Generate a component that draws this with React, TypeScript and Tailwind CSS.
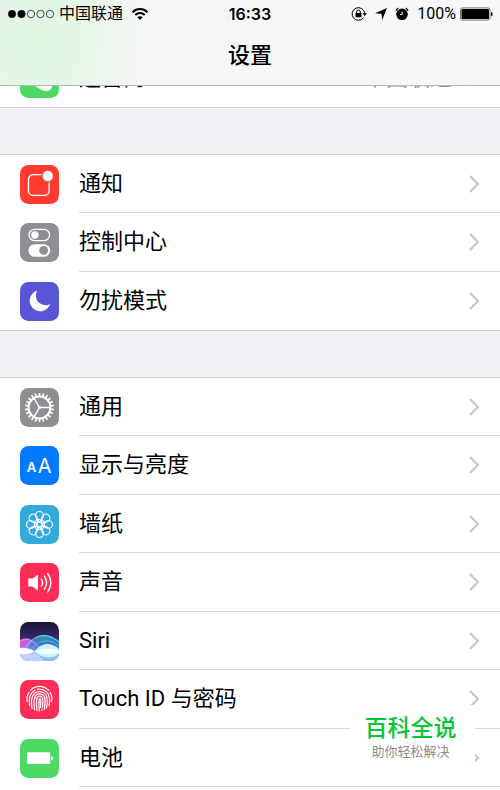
import React from "react";

type Row = { label: string; icon: React.ReactNode; value?: string };

const Tile = ({ color, children }: { color: string; children: React.ReactNode }) => (
  <svg viewBox="0 0 39 39" className="size-[39px] shrink-0" aria-hidden="true">
    <rect width="39" height="39" rx="8.5" fill={color} />
    {children}
  </svg>
);

const PhoneIcon = () => (
  <Tile color="#4cd964">
    <path
      d="M9 10c2-3 4-3 5-1l3 4c1 2-1 3-2 4 1 4 4 7 8 8 1-1 2-3 4-2l4 3c2 1 1 3-1 5-2 1-5 1.500-8 0C15 28 10 22 8.500 16c-.5-2-.5-4 .5-6z"
      fill="#fff"
    />
  </Tile>
);

const NotificationIcon = () => (
  <Tile color="#ff3b30">
    <path
      d="M21.300 9.700H13a4.500 4.500 0 0 0-4.500 4.500v11.600a4.500 4.500 0 0 0 4.500 4.500h11.600a4.500 4.500 0 0 0 4.500-4.500v-8.200"
      fill="none"
      stroke="#fff"
      strokeWidth="1.300"
    />
    <circle cx="27.700" cy="11" r="5.200" fill="#fff" />
  </Tile>
);

const ControlIcon = () => (
  <Tile color="#8e8e93">
    <rect x="9" y="6.300" width="20.600" height="11.400" rx="5.700" fill="none" stroke="#fff" strokeWidth="1.300" />
    <circle cx="14.900" cy="12" r="3.700" fill="#fff" />
    <rect x="8.400" y="21.200" width="21.800" height="12.600" rx="6.300" fill="#fff" />
    <circle cx="23.600" cy="27.400" r="4.400" fill="#8e8e93" />
  </Tile>
);

const MoonIcon = () => (
  <Tile color="#5856d6">
    <path d="M17.200 8.600A10.500 10.500 0 1 0 30.200 21.900 9.600 9.600 0 0 1 17.200 8.600z" fill="#fff" />
  </Tile>
);

const GearIcon = () => (
  <Tile color="#8e8e93">
    <g stroke="#fff" fill="none">
      <circle cx="19.500" cy="19.500" r="10.900" strokeWidth="2" />
      {Array.from({ length: 22 }, (_, i) => (
        <path key={i} d="M19.500 8.500V5" strokeWidth="1.700" transform={`rotate(${(i * 360) / 22} 19.500 19.500)`} />
      ))}
      <path d="M19.500 19.500H30M19.500 19.500L14.200 10.400M19.500 19.500L14.200 28.600" strokeWidth="1.400" />
    </g>
    <circle cx="19.500" cy="19.500" r="1.400" fill="#fff" />
  </Tile>
);

const DisplayIcon = () => (
  <Tile color="#007aff">
    <g fill="#fff" className="font-['Inter',sans-serif]">
      <text x="6.700" y="25.500" fontSize="13" fontWeight="600">A</text>
      <text x="17.700" y="26.500" fontSize="20">A</text>
    </g>
  </Tile>
);

const WallpaperIcon = () => (
  <Tile color="#34aadc">
    <g stroke="#fff" strokeWidth="1.150" fill="none">
      {Array.from({ length: 8 }, (_, i) => (
        <g key={i} transform={`rotate(${i * 45} 19.500 19.500)`}>
          <circle cx="19.500" cy="10.500" r="4" />
          <path d="M17 13.500L19.500 17l2.500-3.500" />
        </g>
      ))}
      <circle cx="19.500" cy="19.500" r="2.500" />
    </g>
  </Tile>
);

const SoundIcon = () => (
  <Tile color="#ff2d55">
    <path d="M8.300 15.600h4.400l5.300-4v16.200l-5.300-4.200H8.300z" fill="#fff" />
    <g stroke="#fff" strokeWidth="1.400" fill="none">
      <path d="M21 15.500q3 4.100 0 8.200" />
      <path d="M24.200 12.700q4.600 7 0 13.900" />
      <path d="M27.400 10q6.800 9.700 0 19.300" />
    </g>
  </Tile>
);

const SiriIcon = () => (
  <svg viewBox="0 0 39 39" className="size-[39px] shrink-0" aria-hidden="true">
    <defs>
      <clipPath id="siri-clip"><rect width="39" height="39" rx="8.500" /></clipPath>
      <linearGradient id="siri-night" x2="0" y2="1">
        <stop stopColor="#1b1238" />
        <stop offset=".4" stopColor="#362766" />
        <stop offset=".72" stopColor="#5878cf" />
        <stop offset="1" stopColor="#a5cdfa" />
      </linearGradient>
      <linearGradient id="siri-pink" x2="1" y2="0">
        <stop stopColor="#ee5be9" />
        <stop offset=".5" stopColor="#a66df0" />
        <stop offset="1" stopColor="#2a84dc" />
      </linearGradient>
      <linearGradient id="siri-teal" x2="0" y2="1">
        <stop stopColor="#35c9d4" />
        <stop offset=".5" stopColor="#2b7fd5" />
        <stop offset="1" stopColor="#7dc6f5" />
      </linearGradient>
    </defs>
    <g clipPath="url(#siri-clip)">
      <rect width="39" height="39" fill="url(#siri-night)" />
      <path d="M0 18q9-5 18 5t21 10v6H0z" fill="url(#siri-pink)" opacity=".85" />
      <path d="M7 28C14 11 26 9 39 19v14H16z" fill="url(#siri-teal)" opacity=".72" />
      <path d="M0 31q10 3 20 0t19 1v7H0z" fill="#8fbdf6" />
      <path d="M0 19q9-5 17 4t14 11" fill="none" stroke="#f08bf2" strokeWidth=".9" />
      <path d="M5 27C14 11 27 10 39 20" fill="none" stroke="#70eee2" strokeWidth=".9" />
      <path d="M8 32C16 18 28 15 39 24" fill="none" stroke="#6fc7f3" strokeWidth=".8" />
      <path d="M0 32q8-4 15-1 6 3 9 8H0z" fill="#cbd4fd" opacity=".8" />
      <path d="M0 26q8-1 15 3.500Q8 33 0 32z" fill="#fff" />
      <path d="M14 29.500C23 20 30 20 39 27v5c-9 6-17 4-25-2.500z" fill="#c4f8fd" />
      <path d="M0 29q7-1 15 .5 11-5 24-1v2q-13 4-24-1Q7 32 0 31z" fill="#fff" />
    </g>
  </svg>
);

const TouchIcon = () => (
  <Tile color="#ff2d55">
    <g stroke="#fff" strokeWidth="1.250" fill="none" strokeLinecap="round">
      <path d="M10.500 10.300a12.500 12.500 0 0 1 18 0" />
      <path d="M7.300 21.500c-.7-3 0-6.500 1.700-9M30 12.500c1.700 2.600 2.300 6 1.500 9" />
      <path d="M9.500 25.500c-1-7 0-12.500 5.500-15.300M17.500 9.200c7-1.200 12 4 12.100 10.800 0 2-.2 4-.6 5.800" />
      <path d="M12 28.300c-.8-5-.8-8 .1-10.700 1.300-4 4-6 7.500-6 5 0 7.700 4 7.700 9 0 2.800-.3 5.300-.8 7.500" />
      <path d="M14.500 29.700c-.8-5-.9-8-.1-11 1-3.300 2.800-4.800 5.200-4.800 3.700 0 5.500 3 5.500 7 0 3-.3 6-.9 8.500" />
      <path d="M17 30.700c-.7-5-.8-7.500-.4-10.700.4-2.700 1.500-3.900 3-3.900 2.200 0 3.300 2 3.300 5 0 2-.1 4-.4 6.200M21.800 30.400l.1-.7" />
      <path d="M19.500 31c-.7-4.500-.8-7.800-.3-11.500.1-1.500 1.200-1.400 1.400 0 .3 3 .2 5.500 0 8" />
    </g>
  </Tile>
);

const BatteryIcon = () => (
  <Tile color="#4cd964">
    <rect x="6.900" y="13.300" width="23.300" height="11.800" rx="1.300" fill="#fff" />
    <path d="M31 17q2.200.3 2.200 2.200T31 21.400z" fill="#fff" />
  </Tile>
);

const Chevron = () => (
  <svg viewBox="0 0 12 20" className="h-5 w-3 shrink-0" aria-hidden="true">
    <path d="M2 2l8 8-8 8" fill="none" stroke="#c7c7cc" strokeWidth="2.200" />
  </svg>
);

const carrier: Row[] = [{ label: "运营商", icon: <PhoneIcon />, value: "中国联通" }];
const alerts: Row[] = [
  { label: "通知", icon: <NotificationIcon /> },
  { label: "控制中心", icon: <ControlIcon /> },
  { label: "勿扰模式", icon: <MoonIcon /> },
];
const device: Row[] = [
  { label: "通用", icon: <GearIcon /> },
  { label: "显示与亮度", icon: <DisplayIcon /> },
  { label: "墙纸", icon: <WallpaperIcon /> },
  { label: "声音", icon: <SoundIcon /> },
  { label: "Siri", icon: <SiriIcon /> },
  { label: "Touch ID 与密码", icon: <TouchIcon /> },
  { label: "电池", icon: <BatteryIcon /> },
];

const Group = ({ rows }: { rows: Row[] }) => (
  <ul className="group border-y border-[#d1d1d5] bg-white last:border-b-0">
    {rows.map((row) => (
      <li key={row.label} className="odd:h-[58px] even:h-[59px]">
        <a href="#" className="flex h-full items-center gap-5 pl-5">
          {row.icon}
          <span className="flex h-full flex-1 items-center border-b border-[#d9d9dc] pr-5 [ul:not(:last-child)>li:last-child_&]:border-0">
            <span className="flex-1 text-[22px] leading-8">{row.label}</span>
            {row.value && <span className="mr-4 text-[22px] leading-8 text-[#8e8e93]">{row.value}</span>}
            <Chevron />
          </span>
        </a>
      </li>
    ))}
  </ul>
);

const StatusBar = () => (
  <div className="grid h-7 grid-cols-[1fr_auto_1fr] items-center px-[7px] text-base leading-5">
    <div className="flex items-center gap-1">
      <svg viewBox="0 0 48 10" className="h-[10px] w-12" aria-hidden="true">
        {[0, 1, 2, 3, 4].map((i) => (
          <circle key={i} cx={5 + i * 9.5} cy="5" r="3.700" fill={i < 2 ? "#000" : "none"} stroke="#222" strokeWidth=".8" />
        ))}
      </svg>
      <span>中国联通</span>
      <svg viewBox="0 0 18 14" className="ml-1 h-[14px] w-[18px]" aria-hidden="true">
        <g fill="none" stroke="#000" strokeWidth="2">
          <path d="M1.500 5.200a10.600 10.600 0 0 1 15 0" />
          <path d="M4.300 8a6.700 6.700 0 0 1 9.400 0" />
        </g>
        <path d="M6.300 10.200q2.700-2.100 5.400 0L9 13z" />
      </svg>
    </div>
    <time className="font-['Inter',sans-serif] font-semibold">16:33</time>
    <div className="flex items-center justify-end">
      <svg viewBox="0 0 16 16" className="mr-2 size-4" aria-hidden="true">
        <path d="M12.500 11.700A6.300 6.300 0 1 1 13.700 7.500" fill="none" stroke="#000" strokeWidth="1" />
        <path d="M11.400 7.200h4.600l-2.300 2.800zM4.500 7h6v4.300h-6z" />
        <path d="M5.700 7.300V5.800a1.800 1.800 0 0 1 3.600 0v1.500" fill="none" stroke="#000" />
      </svg>
      <svg viewBox="0 0 12 12" className="mr-2 size-3" aria-hidden="true">
        <path d="M12 0L7.200 12l-.7-6.200L0 5.200z" />
      </svg>
      <svg viewBox="0 0 14 14" className="mr-2 size-[14px]" aria-hidden="true">
        <circle cx="7" cy="7.300" r="5.800" />
        <path d="M.9 3.700A8 8 0 0 1 3.400 1.100M13.100 3.700a8 8 0 0 0-2.500-2.600" stroke="#000" strokeWidth="1.200" fill="none" />
        <path d="M7.200 4.500v3H5" fill="none" stroke="#fff" strokeWidth="1" />
      </svg>
      <span className="mr-1">100%</span>
      <svg viewBox="0 0 33 14" className="h-[14px] w-[33px]" aria-hidden="true">
        <rect x=".5" y=".9" width="29.500" height="12.200" rx="2" fill="none" stroke="#555" strokeWidth=".8" />
        <rect x="1.500" y="1.900" width="27.500" height="10.200" rx="1.200" />
        <path d="M31 4.800q1.700.5 1.700 2.200T31 9.200z" />
      </svg>
    </div>
  </div>
);

export default function App() {
  return (
    <div className="relative min-h-screen bg-white font-['Roboto','Noto_Sans_CJK_SC',sans-serif] text-black">
      <header className="sticky top-0 z-10 h-[86px] border-b border-[#b9b9bb] bg-[#f7f7f7] bg-[radial-gradient(ellipse_110px_180px_at_38px_30px,#def6e2_0%,#e5f6e7_40%,#f7f7f700_100%)]">
        <StatusBar />
        <h1 className="pt-3 text-center text-[22px] leading-8 font-medium">设置</h1>
      </header>
      <main className="-mt-[38px] flex flex-col gap-[46px] bg-[#efeff4]">
        <Group rows={carrier} />
        <Group rows={alerts} />
        <Group rows={device} />
      </main>
      <aside className="absolute top-[705px] right-[25px] flex h-[61px] w-[125px] flex-col items-center bg-white pt-[10px] pr-1">
        <strong className="text-[23px] leading-7 font-medium text-[#00c832]">百科全说</strong>
        <span className="-mt-px text-[13px] leading-5 text-[#8c8c8c]">助你轻松解决</span>
      </aside>
    </div>
  );
}
